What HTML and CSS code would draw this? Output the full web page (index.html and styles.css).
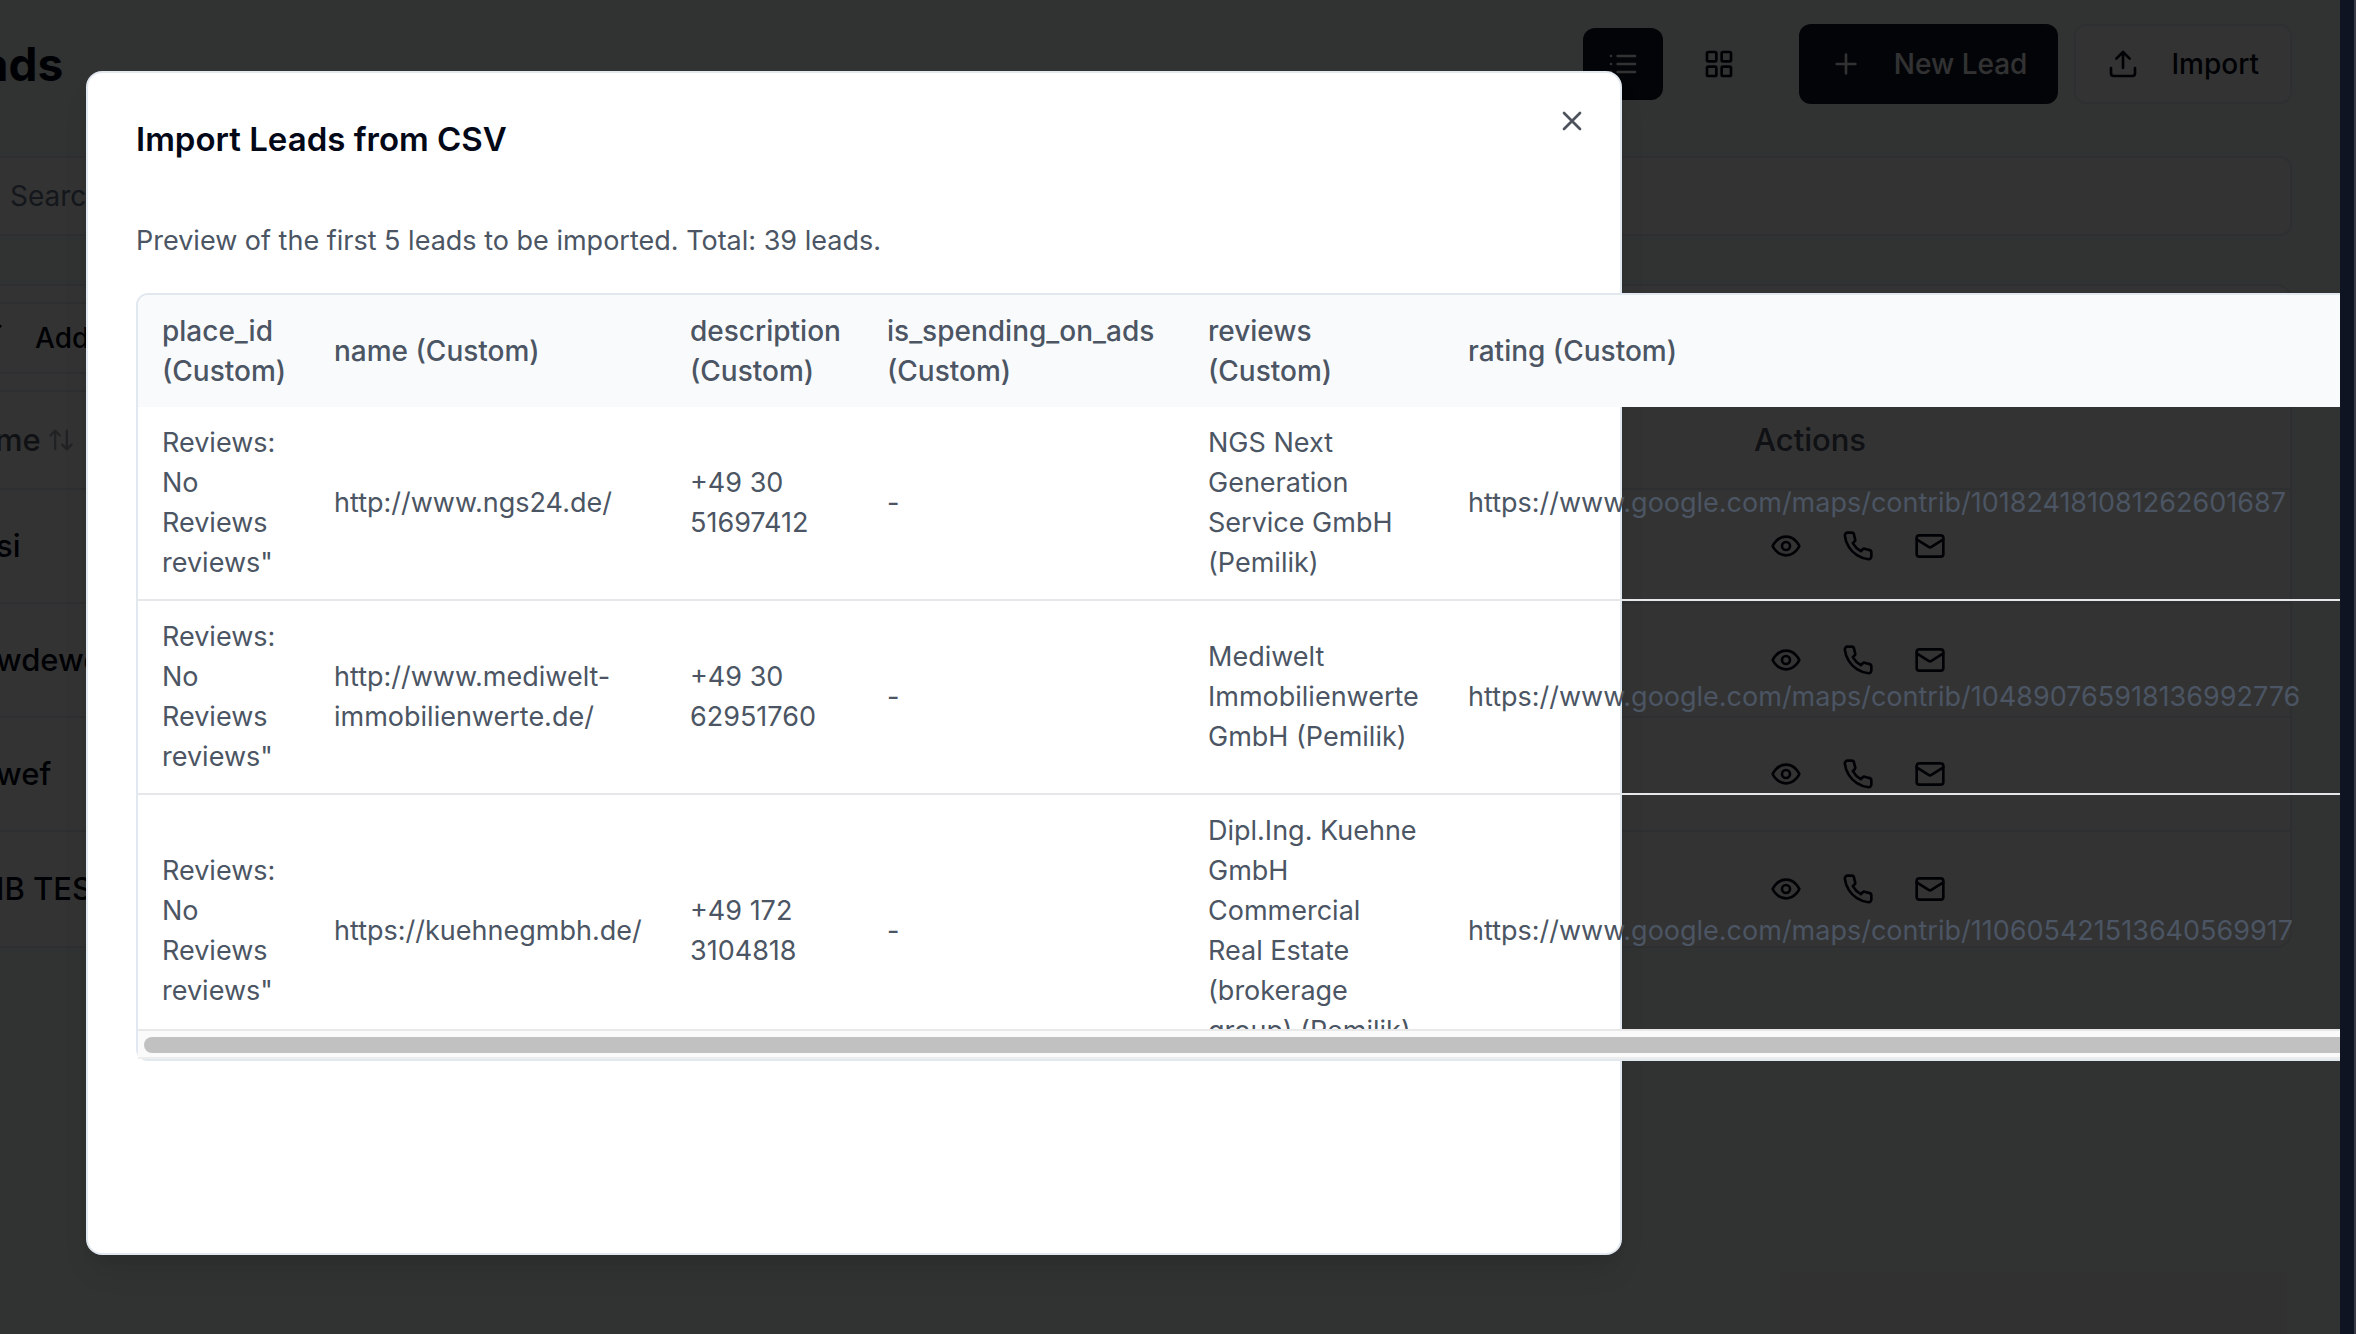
FILE: index.html
```html
<!DOCTYPE html>
<html lang="en">
<head>
<meta charset="utf-8">
<title>Leads</title>
<link rel="stylesheet" href="styles.css">
</head>
<body>
<svg class="sprite" aria-hidden="true">
  <symbol id="i-list" viewBox="0 0 24 24"><path d="M8 6h13M8 12h13M8 18h13M3 6h.01M3 12h.01M3 18h.01"/></symbol>
  <symbol id="i-grid" viewBox="0 0 24 24"><rect x="3" y="3" width="7" height="7" rx="1"/><rect x="14" y="3" width="7" height="7" rx="1"/><rect x="14" y="14" width="7" height="7" rx="1"/><rect x="3" y="14" width="7" height="7" rx="1"/></symbol>
  <symbol id="i-plus" viewBox="0 0 24 24"><path d="M5 12h14M12 5v14"/></symbol>
  <symbol id="i-upload" viewBox="0 0 24 24"><path d="M21 15v4a2 2 0 0 1-2 2H5a2 2 0 0 1-2-2v-4M17 8l-5-5-5 5M12 3v12"/></symbol>
  <symbol id="i-filter" viewBox="0 0 24 24"><path d="M22 3H2l8 9.46V19l4 2v-8.54L22 3z"/></symbol>
  <symbol id="i-sort" viewBox="0 0 24 24"><path d="m21 16-4 4-4-4M17 20V4M3 8l4-4 4 4M7 4v16"/></symbol>
  <symbol id="i-eye" viewBox="0 0 24 24"><path d="M2 12s3-7 10-7 10 7 10 7-3 7-10 7-10-7-10-7Z"/><circle cx="12" cy="12" r="3"/></symbol>
  <symbol id="i-phone" viewBox="0 0 24 24"><path d="M22 16.92v3a2 2 0 0 1-2.18 2 19.79 19.79 0 0 1-8.63-3.07 19.5 19.5 0 0 1-6-6 19.79 19.79 0 0 1-3.07-8.67A2 2 0 0 1 4.11 2h3a2 2 0 0 1 2 1.72 12.84 12.84 0 0 0 .7 2.81 2 2 0 0 1-.45 2.11L8.09 9.91a16 16 0 0 0 6 6l1.27-1.27a2 2 0 0 1 2.11-.45 12.84 12.84 0 0 0 2.81.7A2 2 0 0 1 22 16.92z"/></symbol>
  <symbol id="i-mail" viewBox="0 0 24 24"><rect x="2" y="4" width="20" height="16" rx="2"/><path d="m22 7-8.97 5.7a1.94 1.94 0 0 1-2.06 0L2 7"/></symbol>
  <symbol id="i-close" viewBox="0 0 24 24"><path d="M18 6 6 18M6 6l12 12"/></symbol>
</svg>
<div class="screen">
  <div class="app">
    <main class="page">
      <header class="topbar">
        <h1 class="page-title">Leads</h1>
        <div class="view-toggle">
          <button class="toggle toggle-on" aria-label="List view"><svg class="icon"><use href="#i-list"/></svg></button>
          <button class="toggle" aria-label="Grid view"><svg class="icon"><use href="#i-grid"/></svg></button>
        </div>
        <div class="actions">
          <button class="btn btn-primary"><svg class="icon"><use href="#i-plus"/></svg>New Lead</button>
          <button class="btn btn-outline"><svg class="icon"><use href="#i-upload"/></svg>Import</button>
        </div>
      </header>
      <input class="search" type="search" placeholder="Search" aria-label="Search">
      <section class="card">
        <div class="toolbar">
          <button class="btn btn-outline btn-filter"><svg class="icon"><use href="#i-filter"/></svg>Add</button>
        </div>
        <table class="leads">
          <colgroup><col><col class="col-actions"></colgroup>
          <thead>
            <tr><th class="name-head"><span class="sortable">Name <svg class="icon icon-sort"><use href="#i-sort"/></svg></span></th><th>Actions</th></tr>
          </thead>
          <tbody>
            <tr><td><span class="lead-name">si</span></td><td><div class="row-actions"><button class="icon-btn" aria-label="View"><svg class="icon"><use href="#i-eye"/></svg></button><button class="icon-btn" aria-label="Call"><svg class="icon"><use href="#i-phone"/></svg></button><button class="icon-btn" aria-label="Email"><svg class="icon"><use href="#i-mail"/></svg></button></div></td></tr>
            <tr><td><span class="lead-name">wdewd</span></td><td><div class="row-actions"><button class="icon-btn" aria-label="View"><svg class="icon"><use href="#i-eye"/></svg></button><button class="icon-btn" aria-label="Call"><svg class="icon"><use href="#i-phone"/></svg></button><button class="icon-btn" aria-label="Email"><svg class="icon"><use href="#i-mail"/></svg></button></div></td></tr>
            <tr><td><span class="lead-name">wef</span></td><td><div class="row-actions"><button class="icon-btn" aria-label="View"><svg class="icon"><use href="#i-eye"/></svg></button><button class="icon-btn" aria-label="Call"><svg class="icon"><use href="#i-phone"/></svg></button><button class="icon-btn" aria-label="Email"><svg class="icon"><use href="#i-mail"/></svg></button></div></td></tr>
            <tr><td><span class="lead-name">IB TES</span></td><td><div class="row-actions"><button class="icon-btn" aria-label="View"><svg class="icon"><use href="#i-eye"/></svg></button><button class="icon-btn" aria-label="Call"><svg class="icon"><use href="#i-phone"/></svg></button><button class="icon-btn" aria-label="Email"><svg class="icon"><use href="#i-mail"/></svg></button></div></td></tr>
          </tbody>
        </table>
      </section>
    </main>
    <div class="backdrop">
      <div class="dialog" role="dialog" aria-modal="true" aria-labelledby="dialog-title">
        <h2 class="dialog-title" id="dialog-title">Import Leads from CSV</h2>
        <button class="dialog-close" aria-label="Close"><svg class="icon"><use href="#i-close"/></svg></button>
        <div class="preview">
          <p class="preview-note">Preview of the first 5 leads to be imported. Total: 39 leads.</p>
          <div class="preview-box">
            <div class="preview-scroll">
              <table class="preview-table">
                <colgroup><col class="c-place"><col class="c-name"><col class="c-desc"><col class="c-ads"><col class="c-reviews"><col class="c-rating"></colgroup>
                <thead>
                  <tr><th>place_id (Custom)</th><th>name (Custom)</th><th>description (Custom)</th><th>is_spending_on_ads (Custom)</th><th>reviews (Custom)</th><th>rating (Custom)</th></tr>
                </thead>
                <tbody>
                  <tr><td>Reviews: No Reviews reviews"</td><td>http://www.ngs24.de/</td><td>+49 30 51697412</td><td>-</td><td>NGS Next Generation Service GmbH (Pemilik)</td><td>https://www.google.com/maps/contrib/101824181081262601687</td></tr>
                  <tr><td>Reviews: No Reviews reviews"</td><td>http://www.mediwelt-immobilienwerte.de/</td><td>+49 30 62951760</td><td>-</td><td>Mediwelt Immobilienwerte GmbH (Pemilik)</td><td>https://www.google.com/maps/contrib/104890765918136992776</td></tr>
                  <tr><td>Reviews: No Reviews reviews"</td><td>https://kuehnegmbh.de/</td><td>+49 172 3104818</td><td>-</td><td>Dipl.Ing. Kuehne GmbH Commercial Real Estate (brokerage group) (Pemilik)</td><td>https://www.google.com/maps/contrib/110605421513640569917</td></tr>
                </tbody>
              </table>
            </div>
            <div class="scrollbar"><div class="scrollbar-thumb"></div></div>
          </div>
        </div>
      </div>
    </div>
  </div>
  <div class="edge"></div>
</div>
</body>
</html>
```
FILE: styles.css
```css
*, *::before, *::after { box-sizing: border-box; }

body {
  margin: 0;
  font-family: Inter, "Liberation Sans", sans-serif;
  font-size: 28px;
  line-height: 40px;
  color: #020817;
}

h1, h2, p { margin: 0; }

button {
  font: inherit;
  color: inherit;
  background: none;
  border: 0;
  padding: 0;
}

table { border-collapse: separate; border-spacing: 0; }
th, td { text-align: left; vertical-align: middle; }

.sprite { position: absolute; width: 0; height: 0; }

.icon {
  display: block;
  flex: none;
  width: 32px;
  height: 32px;
  fill: none;
  stroke: currentColor;
  stroke-width: 2;
  stroke-linecap: round;
  stroke-linejoin: round;
}

.screen {
  display: grid;
  grid-template-columns: minmax(0, 1fr) 16px;
  height: 100vh;
  overflow: hidden;
}

.app {
  position: relative;
  overflow: hidden;
  background: #f6f7f8;
}

.edge {
  background: #0f1423;
  border-right: 2px solid #3a3b47;
}

/* Leads page, scrolled sideways under the dialog */
.page {
  display: flex;
  flex-direction: column;
  margin-left: -72px;
  padding: 24px 48px 0 0;
}

.topbar {
  display: flex;
  align-items: center;
  margin-bottom: 52px;
}

.page-title {
  flex: 1;
  font-size: 46px;
  font-weight: 700;
}

.view-toggle { display: flex; gap: 16px; margin-right: 40px; }

.toggle {
  display: grid;
  place-items: center;
  width: 80px;
  height: 72px;
  border-radius: 12px;
}
.toggle-on { background: #0f172a; color: #f8fafc; }

.actions { display: flex; gap: 16px; }

.btn {
  display: flex;
  align-items: center;
  gap: 32px;
  height: 80px;
  padding: 0 31px;
  border-radius: 12px;
  font-weight: 500;
}
.btn-primary { background: #0f172a; color: #f8fafc; }
.btn-outline { background: #fff; border: 2px solid #e2e8f0; }
.btn-filter { height: 72px; }

.search {
  height: 80px;
  margin: 0 0 48px;
  padding: 0 80px;
  font: inherit;
  background: #fff;
  border: 2px solid #e2e8f0;
  border-radius: 12px;
  appearance: none;
}
.search::placeholder { color: #64748b; opacity: 1; }

.card {
  background: #fff;
  border: 2px solid #e2e8f0;
  border-radius: 16px;
}

.toolbar { display: flex; padding: 16px 8px; }

.leads {
  width: 100%;
  table-layout: fixed;
  border-top: 2px solid #e2e8f0;
  font-size: 31px;
}
.col-actions { width: 568px; }
.leads th {
  height: 98px;
  padding: 0 32px;
  font-weight: 500;
  color: #4b5563;
  border-bottom: 2px solid #e2e8f0;
}
.leads .name-head { padding-left: 24px; }
.leads td {
  height: 114px;
  padding: 0 32px;
  font-weight: 500;
  border-bottom: 2px solid #e2e8f0;
}
.leads tbody tr:last-child td { border-bottom: 0; }

.sortable { display: flex; align-items: center; gap: 6px; }
.icon-sort { width: 28px; height: 28px; opacity: .5; }

.lead-name { display: block; padding-left: 34px; }

.row-actions { display: flex; gap: 8px; }
.icon-btn {
  display: grid;
  place-items: center;
  width: 64px;
  height: 64px;
}

/* Import dialog */
.backdrop {
  position: absolute;
  inset: 0;
  padding: 71px 0 0 86px;
  background: rgba(0, 0, 0, .8);
}

.dialog {
  position: relative;
  display: flex;
  flex-direction: column;
  gap: 64px;
  width: 100%;
  max-width: 1536px;
  min-height: 1184px;
  padding: 48px;
  background: #fff;
  border: 2px solid #e2e8f0;
  border-radius: 16px;
  box-shadow: 0 20px 30px -6px rgba(0, 0, 0, .1), 0 8px 12px -8px rgba(0, 0, 0, .1);
}

.dialog-title {
  font-size: 33px;
  line-height: 36px;
  font-weight: 600;
}

.dialog-close {
  position: absolute;
  top: 32px;
  right: 32px;
  color: #4d525d;
}

.preview { display: flex; flex-direction: column; gap: 32px; color: #4b5563; }
.preview-note { font-size: 27px; }

.preview-box {
  width: 2400px;
  border: 2px solid #e2e8f0;
  border-radius: 12px;
}

.preview-scroll { height: 734px; overflow: hidden; border-radius: 10px 10px 0 0; }

.preview-table { width: 100%; table-layout: fixed; }
.c-place { width: 172px; }
.c-name { width: 356px; }
.c-desc { width: 197px; }
.c-ads { width: 321px; }
.c-reviews { width: 260px; }

.preview-table th {
  padding: 16px 24px;
  font-weight: 500;
  background: #f9fafc;
}
.preview-table td {
  padding: 16px 24px;
  font-size: 27px;
  border-bottom: 2px solid #e5e7eb;
}

.scrollbar {
  height: 30px;
  padding: 6px;
  background: #fafafa;
  border-top: 2px solid #e8e8e8;
  border-bottom: 2px solid #ededed;
}
.scrollbar-thumb { height: 16px; border-radius: 8px; background: #c1c1c1; }
```
